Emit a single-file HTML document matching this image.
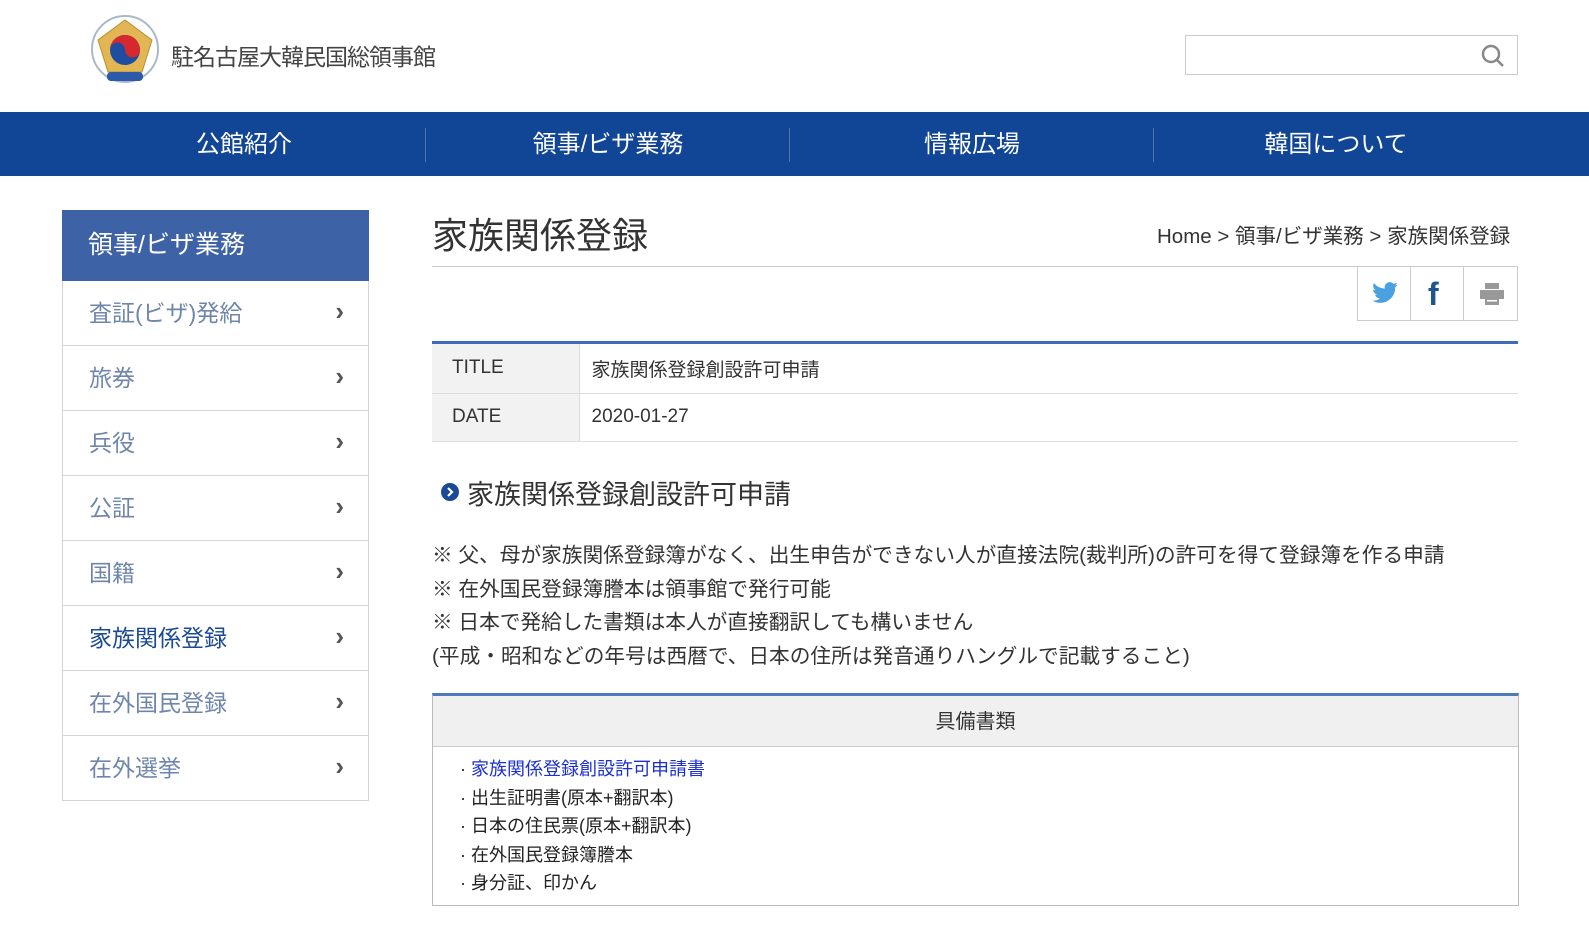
<!DOCTYPE html>
<html><head><meta charset="utf-8"><style>
*{margin:0;padding:0;box-sizing:border-box}
body{width:1589px;height:947px;overflow:hidden;background:#fff;font-family:"Liberation Sans","Noto Sans CJK JP",sans-serif;color:#333;position:relative}
.a{position:absolute}
.nav{left:0;top:112px;width:1589px;height:64px;background:#114596}
.nav div{position:absolute;top:0;height:64px;line-height:66px;color:#fff;font-size:24px;text-align:center;width:364px}
.sep{position:absolute;top:16px;width:1px;height:34px;background:#4f74b0}
.side{left:62px;top:210px;width:307px}
.st{height:71px;background:#3e62a6;color:#fff;font-size:25px;line-height:70px;padding-left:26px}
.si{height:65px;border:1px solid #d5d5d5;border-top:none;color:#6f86ac;font-size:23px;line-height:64px;padding-left:26px;position:relative}
.si:after{content:"›";position:absolute;right:24px;top:-2px;font-size:26px;color:#555;font-weight:bold}
.si.on{color:#1a4a94}
table{border-collapse:collapse}
</style></head><body>
<svg class="a" style="left:90px;top:14px" width="70" height="70" viewBox="0 0 70 70">
<circle cx="35" cy="35" r="33" fill="none" stroke="#aab8cc" stroke-width="2"/>
<polygon points="35,6 62,26 52,58 18,58 8,26" fill="#e2b654" stroke="#b8902e"/>
<circle cx="35" cy="36" r="15" fill="#1f4ea0"/>
<path d="M20 36a15 15 0 0 1 30 0a7.5 7.5 0 0 1-15 0a7.5 7.5 0 0 0-15 0z" fill="#d6282e"/>
<rect x="17" y="58" width="36" height="9" rx="4" fill="#2a5aa8"/>
</svg>
<div class="a" style="left:171px;top:38px;font-size:23px;color:#444;letter-spacing:-1px">駐名古屋大韓民国総領事館</div>
<div class="a" style="left:1185px;top:35px;width:333px;height:40px;border:1px solid #ccc"></div>
<svg class="a" style="left:1480px;top:43px" width="26" height="26" viewBox="0 0 26 26"><circle cx="11" cy="11" r="8" fill="none" stroke="#888" stroke-width="2.5"/><path d="M17 17l6 6" stroke="#888" stroke-width="2.5"/></svg>
<div class="a nav">
<div style="left:62px">公館紹介</div><span class="sep" style="left:425px"></span>
<div style="left:426px">領事/ビザ業務</div><span class="sep" style="left:789px"></span>
<div style="left:790px">情報広場</div><span class="sep" style="left:1153px"></span>
<div style="left:1154px">韓国について</div>
</div>
<div class="a side">
<div class="st">領事/ビザ業務</div>
<div class="si">査証(ビザ)発給</div>
<div class="si">旅券</div>
<div class="si">兵役</div>
<div class="si">公証</div>
<div class="si">国籍</div>
<div class="si on">家族関係登録</div>
<div class="si">在外国民登録</div>
<div class="si">在外選挙</div>
</div>
<div class="a" style="left:432px;top:207px;font-size:36px;color:#333">家族関係登録</div>
<div class="a" style="left:1157px;top:219px;font-size:20.5px;color:#333">Home &gt; 領事/ビザ業務 &gt; 家族関係登録</div>
<div class="a" style="left:432px;top:266px;width:1086px;height:1px;background:#ccc"></div>
<div class="a" style="left:1357px;top:267px;width:161px;height:54px;border:1px solid #ccc;border-top:none"></div>
<div class="a" style="left:1410px;top:267px;width:1px;height:54px;background:#ccc"></div>
<div class="a" style="left:1463px;top:267px;width:1px;height:54px;background:#ccc"></div>
<svg class="a" style="left:1371px;top:281px" width="28" height="26" viewBox="0 0 24 22"><path d="M23 3c-.8.4-1.7.6-2.6.7.9-.6 1.6-1.4 2-2.5-.9.5-1.9.9-2.9 1.1A4.5 4.5 0 0 0 11.8 6.4 12.8 12.8 0 0 1 2.5 1.7a4.5 4.5 0 0 0 1.4 6c-.7 0-1.4-.2-2-.6 0 2.2 1.6 4 3.6 4.4-.7.2-1.4.2-2 .1.6 1.8 2.2 3.1 4.2 3.1A9 9 0 0 1 1 16.6 12.8 12.8 0 0 0 20.7 5.1c.9-.6 1.7-1.4 2.3-2.1z" fill="#4aa1e0"/></svg>
<div class="a" style="left:1428px;top:276px;font-size:32px;font-weight:bold;color:#1c5691;font-family:'Liberation Sans',sans-serif">f</div>
<svg class="a" style="left:1479px;top:281px" width="26" height="26" viewBox="0 0 26 26"><rect x="6" y="2" width="14" height="6" fill="#999"/><rect x="1" y="9" width="24" height="9" fill="#999"/><rect x="6" y="17" width="14" height="7" fill="#999"/><rect x="8" y="19" width="10" height="1.5" fill="#fff"/></svg>
<div class="a" style="left:432px;top:341px;width:1086px;height:3px;background:#3d6cb9"></div>
<table class="a" style="left:432px;top:344px;width:1086px;font-size:19px">
<tr style="height:49px;border-bottom:1px solid #ddd"><td style="width:147px;background:#f2f2f2;padding-left:20px;border-right:1px solid #ddd">TITLE</td><td style="padding-left:12px">家族関係登録創設許可申請</td></tr>
<tr style="height:48px;border-bottom:1px solid #ddd"><td style="background:#f2f2f2;padding-left:20px;border-right:1px solid #ddd">DATE</td><td style="padding-left:12px">2020-01-27</td></tr>
</table>
<svg class="a" style="left:440px;top:482px" width="20" height="20" viewBox="0 0 20 20"><circle cx="10" cy="10" r="9" fill="#1a4a94"/><path d="M8 6l4 4-4 4" stroke="#fff" stroke-width="2.2" fill="none"/></svg>
<div class="a" style="left:467px;top:473px;font-size:27px;color:#333">家族関係登録創設許可申請</div>
<div class="a" style="left:432px;top:539px;font-size:20.7px;line-height:33.5px;color:#333">
※ 父、母が家族関係登録簿がなく、出生申告ができない人が直接法院(裁判所)の許可を得て登録簿を作る申請<br>
※ 在外国民登録簿謄本は領事館で発行可能<br>
※ 日本で発給した書類は本人が直接翻訳しても構いません<br>
(平成・昭和などの年号は西暦で、日本の住所は発音通りハングルで記載すること)</div>
<div class="a" style="left:432px;top:693px;width:1087px;height:213px;border:1px solid #bbb;border-top:3px solid #4f78bd"></div>
<div class="a" style="left:433px;top:696px;width:1085px;height:51px;background:#f0f0f0;border-bottom:1px solid #ccc;text-align:center;line-height:52px;font-size:20px;color:#333">具備書類</div>
<div class="a" style="left:460px;top:755px;font-size:18px;line-height:28.5px;color:#222">
<span>· <span style="color:#1a2fd0">家族関係登録創設許可申請書</span></span><br>· 出生証明書(原本+翻訳本)<br>· 日本の住民票(原本+翻訳本)<br>· 在外国民登録簿謄本<br>· 身分証、印かん</div>
</body></html>
